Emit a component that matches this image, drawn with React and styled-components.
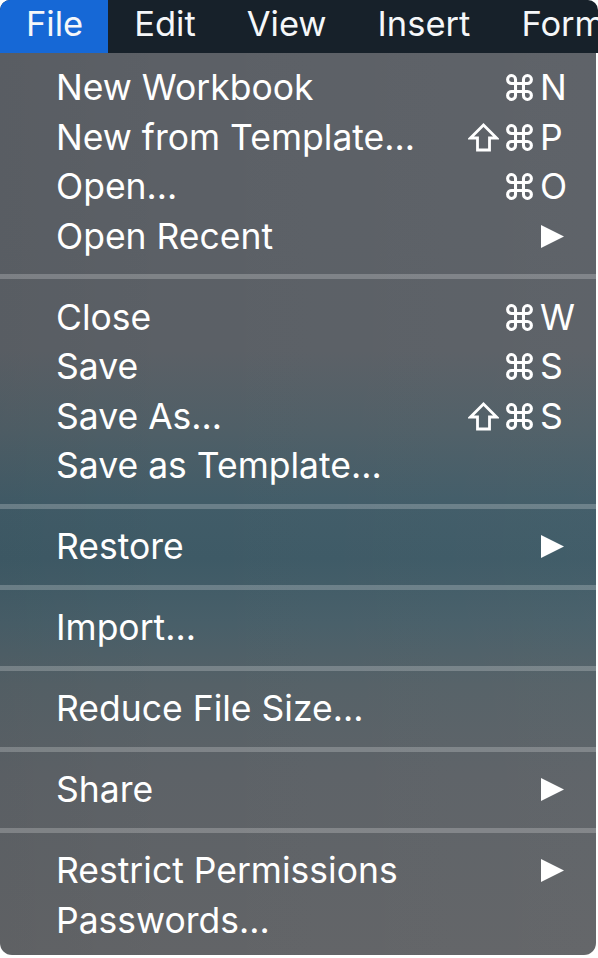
import React from "react";
import styled, { createGlobalStyle } from "styled-components";

const Global = createGlobalStyle`
  html, body { margin: 0; padding: 0; background: #ffffff; }
  body { font-family: Inter, "Liberation Sans", Arial, sans-serif; -webkit-font-smoothing: antialiased; }
`;

const Screen = styled.div`
  width: 598px;
  display: flex;
  flex-direction: column;
`;

const MenuBar = styled.div`
  height: 53px;
  display: flex;
  align-items: stretch;
  background: #17212a;
  border-radius: 10px 10px 0 0;
  overflow: hidden;
`;

const BarItem = styled.div`
  display: flex;
  align-items: center;
  flex-shrink: 0;
  padding: 0 25px 6px 26px;
  font-size: 34.5px;
  color: #f5f7f9;
  white-space: nowrap;
  background: ${(p) => (p.$active ? "#1668d6" : "transparent")};
`;

const Dropdown = styled.div`
  width: 596px;
  padding: 10px 0 10px;
  border-radius: 0 0 12px 12px;
  background:
    linear-gradient(90deg, rgba(0,0,0,0.03) 0%, rgba(0,0,0,0) 30%, rgba(255,255,255,0.02) 100%),
    linear-gradient(180deg,
      #5c6066 0%,
      #5b6066 33%,
      #4f5f67 42%,
      #415c68 50%,
      #3e5a66 56%,
      #485f69 63%,
      #556167 70%,
      #5d6267 80%,
      #626467 100%);
  display: flex;
  flex-direction: column;
`;

const Row = styled.div`
  height: 49.5px;
  display: grid;
  grid-template-columns: 1fr auto 58px;
  align-items: center;
  padding-left: 56px;
  color: #ffffff;
  font-size: 35.5px;
  line-height: 49.5px;
  white-space: nowrap;
`;

const Label = styled.span``;

const Mods = styled.span`
  display: flex;
  align-items: center;
  justify-content: flex-end;
  gap: 7px;
  margin-right: 5px;
`;

const Key = styled.span`
  display: flex;
  align-items: center;
  padding-left: 2px;
`;

const Separator = styled.div`
  height: 31.5px;
  display: flex;
  align-items: center;
  &::after {
    content: "";
    display: block;
    width: 100%;
    height: 5px;
    background: rgba(255, 255, 255, 0.22);
  }
`;

const Cmd = () => (
  <svg width="27" height="27" viewBox="1.8 1.8 20.4 20.4" fill="none" stroke="#fff" strokeWidth="2.3" strokeLinecap="round" strokeLinejoin="round">
    <path d="M15 6v12a3 3 0 1 0 3-3H6a3 3 0 1 0 3 3V6a3 3 0 1 0-3 3h12a3 3 0 1 0-3-3" />
  </svg>
);

const Shift = () => (
  <svg width="31" height="29" viewBox="0 0 31 29" fill="none" stroke="#fff" strokeWidth="2.8" strokeLinejoin="miter">
    <path d="M15.5 2 L2.5 15 H9.5 V27 H21.5 V15 H28.5 Z" />
  </svg>
);

const Arrow = () => (
  <svg width="24" height="23" viewBox="0 0 24 23">
    <polygon points="1,0 24,11.5 1,23" fill="#fff" />
  </svg>
);

const sections = [
  [
    { label: "New Workbook", mods: ["cmd"], key: "N" },
    { label: "New from Template...", mods: ["shift", "cmd"], key: "P" },
    { label: "Open...", mods: ["cmd"], key: "O" },
    { label: "Open Recent", sub: true },
  ],
  [
    { label: "Close", mods: ["cmd"], key: "W" },
    { label: "Save", mods: ["cmd"], key: "S" },
    { label: "Save As...", mods: ["shift", "cmd"], key: "S" },
    { label: "Save as Template..." },
  ],
  [{ label: "Restore", sub: true }],
  [{ label: "Import..." }],
  [{ label: "Reduce File Size..." }],
  [{ label: "Share", sub: true }],
  [
    { label: "Restrict Permissions", sub: true },
    { label: "Passwords..." },
  ],
];

const MenuRow = ({ item }) => (
  <Row>
    <Label>{item.label}</Label>
    <Mods>
      {(item.mods || []).map((m, i) =>
        m === "cmd" ? <Cmd key={i} /> : <Shift key={i} />
      )}
    </Mods>
    <Key>{item.sub ? <Arrow /> : item.key}</Key>
  </Row>
);

export default function App() {
  return (
    <Screen>
      <Global />
      <MenuBar>
        <BarItem $active>File</BarItem>
        <BarItem>Edit</BarItem>
        <BarItem>View</BarItem>
        <BarItem>Insert</BarItem>
        <BarItem>Format</BarItem>
      </MenuBar>
      <Dropdown>
        {sections.map((sec, si) => (
          <React.Fragment key={si}>
            {si > 0 && <Separator />}
            {sec.map((item, ii) => (
              <MenuRow key={ii} item={item} />
            ))}
          </React.Fragment>
        ))}
      </Dropdown>
    </Screen>
  );
}
